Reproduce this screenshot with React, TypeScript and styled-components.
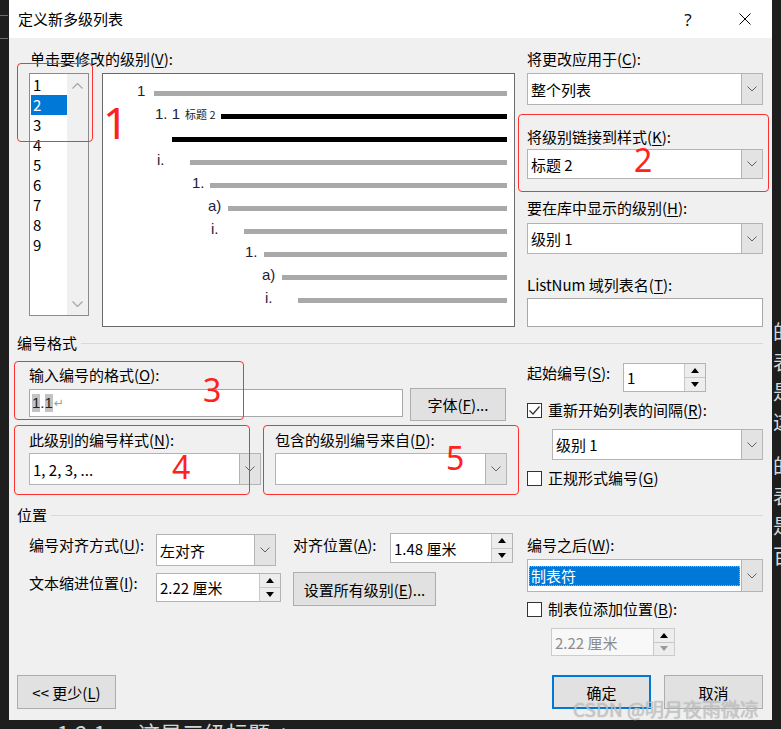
import React from "react";
import styled, { createGlobalStyle, css } from "styled-components";

const UI_FONT = `"Noto Sans CJK SC", "Noto Sans", sans-serif`;

const GlobalStyle = createGlobalStyle`
  html, body {
    margin: 0;
    padding: 0;
    background: #1e1e1e;
  }
  #root {
    width: 781px;
    height: 729px;
  }
`;

const levels = ["1", "2", "3", "4", "5", "6", "7", "8", "9"];

// x = where the number starts, bar = where the line starts (page px)
const previewRows = [
  { num: "1", x: 137, bar: 154 },
  { num: "1. 1", x: 155, bar: 221, tag: "标题 2", dark: true },
  { num: "", x: 172, bar: 172, dark: true },
  { num: "i.", x: 157, bar: 190 },
  { num: "1.", x: 192, bar: 210 },
  { num: "a)", x: 208, bar: 228 },
  { num: "i.", x: 211, bar: 244 },
  { num: "1.", x: 245, bar: 264 },
  { num: "a)", x: 262, bar: 282 },
  { num: "i.", x: 265, bar: 298 },
];

const marks = [
  { left: 17, top: 63, w: 76, h: 79 },
  { left: 518, top: 114, w: 251, h: 78 },
  { left: 14, top: 361, w: 230, h: 59 },
  { left: 14, top: 425, w: 236, h: 70 },
  { left: 263, top: 425, w: 256, h: 70 },
];

const markNums = [
  { n: "1", left: 103, top: 100, size: 44 },
  { n: "2", left: 634, top: 144, size: 32 },
  { n: "3", left: 203, top: 374, size: 32 },
  { n: "4", left: 172, top: 451, size: 32 },
  { n: "5", left: 446, top: 442, size: 32 },
];

function ChevronDown() {
  return (
    <svg width="10" height="6" viewBox="0 0 10 6">
      <polyline points="0.5,0.5 5,5 9.5,0.5" fill="none" stroke="#606060" strokeWidth="1" />
    </svg>
  );
}

function ScrollChevron({ up }: { up?: boolean }) {
  return (
    <svg width="11" height="6" viewBox="0 0 11 6">
      <polyline
        points={up ? "0.5,5.5 5.5,0.5 10.5,5.5" : "0.5,0.5 5.5,5.5 10.5,0.5"}
        fill="none"
        stroke="#a8a8a8"
        strokeWidth="1.3"
      />
    </svg>
  );
}

function ComboBox(props: {
  value?: string;
  w?: number;
  h: number;
  mt?: number;
  ml?: number;
  selected?: boolean;
}) {
  return (
    <ComboFrame $w={props.w} $h={props.h} $mt={props.mt} $ml={props.ml}>
      <ComboValue $selected={props.selected}>{props.value}</ComboValue>
      <DropButton>
        <ChevronDown />
      </DropButton>
    </ComboFrame>
  );
}

function SpinBox(props: {
  value: string;
  w: number;
  h: number;
  mt?: number;
  ml?: number;
  disabled?: boolean;
}) {
  return (
    <SpinFrame $w={props.w} $h={props.h} $mt={props.mt} $ml={props.ml} $disabled={props.disabled}>
      <SpinValue $disabled={props.disabled}>{props.value}</SpinValue>
      <SpinButtons>
        <SpinBtn>
          <Tri />
        </SpinBtn>
        <SpinBtn>
          <Tri $down $muted={props.disabled} />
        </SpinBtn>
      </SpinButtons>
    </SpinFrame>
  );
}

function CheckBox({ checked }: { checked?: boolean }) {
  return (
    <Box>
      {checked && (
        <svg width="13" height="13" viewBox="0 0 13 13">
          <polyline points="1.5,6.5 5,10 11.5,2.5" fill="none" stroke="#333" strokeWidth="1.2" />
        </svg>
      )}
    </Box>
  );
}

export default function App() {
  return (
    <>
      <GlobalStyle />
      <Page>
        <LeftStrip>
          <Tick $mt={15} />
          <Tick $mt={22} />
        </LeftStrip>

        <Dialog>
          <TitleBar>
            <TitleText>定义新多级列表</TitleText>
            <TitleButtons>
              <TitleButton>?</TitleButton>
              <TitleButton>
                <svg width="12" height="12" viewBox="0 0 12 12">
                  <line x1="0.5" y1="0.5" x2="11.5" y2="11.5" stroke="#000" strokeWidth="1" />
                  <line x1="11.5" y1="0.5" x2="0.5" y2="11.5" stroke="#000" strokeWidth="1" />
                </svg>
              </TitleButton>
            </TitleButtons>
          </TitleBar>

          <Body>
            {/* 级别 + 预览 */}
            <Section $h={295} $pt={11}>
              <Pane $pl={12}>
                <Label $ml={1}>
                  单击要修改的级别(<Key>V</Key>):
                </Label>
                <LevelRow>
                  <LevelList>
                    <LevelItems>
                      {levels.map((l) => (
                        <LevelItem key={l} $selected={l === "2"}>
                          {l}
                        </LevelItem>
                      ))}
                    </LevelItems>
                    <ScrollTrack>
                      <ScrollChevron up />
                      <ScrollChevron />
                    </ScrollTrack>
                  </LevelList>
                  <Preview>
                    {previewRows.map((r, i) => (
                      <PRow key={i} $indent={r.x - 103}>
                        <PNum $w={r.bar - r.x}>
                          {r.num}
                          {r.tag && <PTag>{r.tag}</PTag>}
                        </PNum>
                        <PBar $dark={r.dark} />
                      </PRow>
                    ))}
                  </Preview>
                </LevelRow>
              </Pane>
              <Pane>
                <Label>
                  将更改应用于(<Key>C</Key>):
                </Label>
                <ComboBox value="整个列表" h={32} mt={4} />
                <Label $mt={22}>
                  将级别链接到样式(<Key>K</Key>):
                </Label>
                <ComboBox value="标题 2" h={30} mt={2} />
                <Label $mt={19}>
                  要在库中显示的级别(<Key>H</Key>):
                </Label>
                <ComboBox value="级别 1" h={31} mt={5} />
                <Label $mt={21}>
                  ListNum 域列表名(<Key>T</Key>):
                </Label>
                <TextField $h={29} $mt={3} />
              </Pane>
            </Section>

            <GroupHeader>
              编号格式
              <GroupRule />
            </GroupHeader>

            <Section $h={152}>
              <Pane $pl={12}>
                <Label $mt={12}>
                  输入编号的格式(<Key>O</Key>):
                </Label>
                <InlineRow $mt={3}>
                  <TextField $w={374} $h={28} $mt={1}>
                    <FormatText>
                      <FieldMark>1</FieldMark>.<FieldMark>1</FieldMark>
                      <Return>↵</Return>
                    </FormatText>
                  </TextField>
                  <Button $w={96} $h={33} $ml={7}>
                    字体(<Key>F</Key>)...
                  </Button>
                </InlineRow>
                <InlineRow $mt={9} $gap={14}>
                  <Field>
                    <Label>
                      此级别的编号样式(<Key>N</Key>):
                    </Label>
                    <ComboBox value="1, 2, 3, ..." h={32} mt={3} />
                  </Field>
                  <Field>
                    <Label>
                      包含的级别编号来自(<Key>D</Key>):
                    </Label>
                    <ComboBox h={32} mt={3} />
                  </Field>
                </InlineRow>
              </Pane>
              <Pane>
                <InlineRow $mt={10}>
                  <Label $w={96}>
                    起始编号(<Key>S</Key>):
                  </Label>
                  <SpinBox value="1" w={83} h={29} />
                </InlineRow>
                <CheckRow $mt={8}>
                  <CheckBox checked />
                  <span>
                    重新开始列表的间隔(<Key>R</Key>):
                  </span>
                </CheckRow>
                <ComboBox value="级别 1" w={211} h={31} mt={9} ml={25} />
                <CheckRow $mt={8}>
                  <CheckBox />
                  <span>
                    正规形式编号(<Key>G</Key>)
                  </span>
                </CheckRow>
              </Pane>
            </Section>

            <GroupHeader>
              位置
              <GroupRule />
            </GroupHeader>

            <Section $h={140}>
              <Pane $pl={12}>
                <PosGrid>
                  <Label $mt={2}>
                    编号对齐方式(<Key>U</Key>):
                  </Label>
                  <ComboBox value="左对齐" w={120} h={32} mt={1} />
                  <Label $mt={2}>
                    对齐位置(<Key>A</Key>):
                  </Label>
                  <SpinBox value="1.48 厘米" w={123} h={30} />
                  <Label $mt={1}>
                    文本缩进位置(<Key>I</Key>):
                  </Label>
                  <SpinBox value="2.22 厘米" w={125} h={29} mt={1} />
                  <WideCell>
                    <Button $w={143} $h={34}>
                      设置所有级别(<Key>E</Key>)...
                    </Button>
                  </WideCell>
                </PosGrid>
              </Pane>
              <Pane>
                <Label $mt={10}>
                  编号之后(<Key>W</Key>):
                </Label>
                <ComboBox value="制表符" h={33} mt={4} selected />
                <CheckRow $mt={7}>
                  <CheckBox />
                  <span>
                    制表位添加位置(<Key>B</Key>):
                  </span>
                </CheckRow>
                <SpinBox value="2.22 厘米" w={124} h={28} mt={9} ml={24} disabled />
              </Pane>
            </Section>

            <Footer>
              <Button $w={99} $h={34}>
                {"<< 更少("}
                <Key>L</Key>)
              </Button>
              <FooterGroup>
                <Button $w={99} $h={34} $primary>
                  确定
                </Button>
                <Button $w={99} $h={34}>
                  取消
                </Button>
              </FooterGroup>
            </Footer>
          </Body>
        </Dialog>

        <RightStrip>
          <BackText>的表是这</BackText>
          <BackText $mt={14}>的表是百</BackText>
        </RightStrip>

        <BottomStrip>
          <BackLine>
            <span>1.2.1</span>
            <span>这是三级标题↵</span>
          </BackLine>
        </BottomStrip>

        <Overlay>
          {marks.map((m, i) => (
            <Mark key={i} $left={m.left} $top={m.top} $w={m.w} $h={m.h} />
          ))}
          {markNums.map((m) => (
            <MarkNum key={m.n} $left={m.left} $top={m.top} $size={m.size}>
              {m.n}
            </MarkNum>
          ))}
          <Watermark>CSDN @明月夜雨微凉</Watermark>
        </Overlay>
      </Page>
    </>
  );
}

const Page = styled.div`
  position: relative;
  width: 781px;
  height: 729px;
  overflow: hidden;
  display: grid;
  grid-template-columns: 9px 763px 9px;
  grid-template-rows: 720px 9px;
  background: #1e1e1e;
  font-family: ${UI_FONT};
  color: #000;
`;

const LeftStrip = styled.div`
  display: flex;
  flex-direction: column;
`;

const Tick = styled.div<{ $mt: number }>`
  width: 8px;
  height: 1px;
  margin-top: ${(p) => p.$mt}px;
  background: #6c6c6c;
`;

const RightStrip = styled.div`
  overflow: hidden;
  padding-top: 317px;
  padding-left: 1px;
`;

const BackText = styled.div<{ $mt?: number }>`
  width: 20px;
  margin-top: ${(p) => p.$mt || 0}px;
  font-size: 20px;
  line-height: 30px;
  color: #d6d6d6;
  word-break: break-all;
`;

const BottomStrip = styled.div`
  grid-column: 1 / 4;
  overflow: hidden;
`;

const BackLine = styled.div`
  display: flex;
  gap: 32px;
  padding: 1px 0 0 57px;
  font-size: 22px;
  line-height: 22px;
  color: #d6d6d6;
  white-space: nowrap;
`;

const Dialog = styled.div`
  display: flex;
  flex-direction: column;
  background: #f0f0f0;
`;

const TitleBar = styled.div`
  height: 38px;
  flex-shrink: 0;
  box-sizing: border-box;
  padding: 0 4px 0 9px;
  display: flex;
  align-items: center;
  background: #fff;
`;

const TitleText = styled.div`
  flex: 1;
  font-size: 15px;
  line-height: 20px;
`;

const TitleButtons = styled.div`
  display: flex;
  gap: 11px;
`;

const TitleButton = styled.div`
  width: 46px;
  height: 38px;
  display: flex;
  align-items: center;
  justify-content: center;
  font-family: "Noto Sans", sans-serif;
  font-size: 17px;
  color: #111;
`;

const Body = styled.div`
  flex: 1;
  display: flex;
  flex-direction: column;
  padding: 0 9px 0 8px;
`;

const Section = styled.div<{ $h: number; $pt?: number }>`
  height: ${(p) => p.$h}px;
  box-sizing: border-box;
  padding-top: ${(p) => p.$pt || 0}px;
  display: grid;
  grid-template-columns: 510px 236px;
  align-items: start;
`;

const Pane = styled.div<{ $pl?: number }>`
  display: flex;
  flex-direction: column;
  align-items: flex-start;
  padding-left: ${(p) => p.$pl || 0}px;
  & > * {
    flex-shrink: 0;
  }
`;

const Label = styled.div<{ $mt?: number; $ml?: number; $w?: number }>`
  height: 20px;
  margin-top: ${(p) => p.$mt || 0}px;
  margin-left: ${(p) => p.$ml || 0}px;
  ${(p) => p.$w && `width: ${p.$w}px;`}
  flex-shrink: 0;
  font-size: 15px;
  line-height: 20px;
  white-space: nowrap;
`;

const Key = styled.u`
  text-underline-offset: 2px;
`;

const GroupHeader = styled.div`
  height: 20px;
  display: flex;
  align-items: center;
  gap: 4px;
  font-size: 15px;
  line-height: 20px;
  white-space: nowrap;
`;

const GroupRule = styled.div`
  flex: 1;
  height: 1px;
  background: #d9d9d9;
`;

const LevelRow = styled.div`
  display: flex;
  align-items: flex-start;
  gap: 13px;
  margin-top: 4px;
`;

const LevelList = styled.div`
  width: 60px;
  height: 243px;
  box-sizing: border-box;
  border: 1px solid #8c8c8c;
  background: #fff;
  display: flex;
`;

const LevelItems = styled.div`
  width: 37px;
  padding: 1px 0 0 1px;
  box-sizing: border-box;
`;

const LevelItem = styled.div<{ $selected?: boolean }>`
  height: 20px;
  padding-left: 2px;
  font-size: 15px;
  line-height: 20px;
  ${(p) =>
    p.$selected &&
    css`
      background: #0078d7;
      color: #fff;
    `}
`;

const ScrollTrack = styled.div`
  flex: 1;
  background: #f0f0f0;
  display: flex;
  flex-direction: column;
  justify-content: space-between;
  align-items: center;
  padding: 9px 0 8px;
`;

const Preview = styled.div`
  width: 413px;
  height: 254px;
  box-sizing: border-box;
  border: 1px solid #6a6a6a;
  background: #fff;
  padding-top: 8px;
`;

const PRow = styled.div<{ $indent: number }>`
  height: 23px;
  display: flex;
  align-items: center;
  padding: 0 7px 0 ${(p) => p.$indent}px;
`;

const PNum = styled.span<{ $w: number }>`
  width: ${(p) => p.$w}px;
  flex-shrink: 0;
  padding-bottom: 5px;
  display: flex;
  align-items: baseline;
  font-family: "Liberation Sans", "Noto Sans", sans-serif;
  font-size: 15px;
  line-height: 18px;
  color: #1d2040;
  white-space: pre;
`;

const PTag = styled.span`
  margin-left: 5px;
  font-family: ${UI_FONT};
  font-size: 11px;
  color: #222;
`;

const PBar = styled.div<{ $dark?: boolean }>`
  flex: 1;
  height: 5px;
  background: ${(p) => (p.$dark ? "#000" : "#a9a9a9")};
`;

const ComboFrame = styled.div<{ $w?: number; $h: number; $mt?: number; $ml?: number }>`
  width: ${(p) => (p.$w ? `${p.$w}px` : "100%")};
  height: ${(p) => p.$h}px;
  margin-top: ${(p) => p.$mt || 0}px;
  margin-left: ${(p) => p.$ml || 0}px;
  box-sizing: border-box;
  border: 1px solid #b4b4b4;
  background: #fff;
  display: flex;
`;

const ComboValue = styled.div<{ $selected?: boolean }>`
  flex: 1;
  display: flex;
  align-items: center;
  padding-left: 3px;
  font-size: 15px;
  white-space: nowrap;
  ${(p) =>
    p.$selected &&
    css`
      align-self: center;
      height: 20px;
      margin: 0 1px;
      padding-left: 2px;
      background: #0078d7;
      color: #fff;
      outline: 1px dotted #e9a24a;
      outline-offset: -1px;
    `}
`;

const DropButton = styled.div`
  width: 20px;
  display: flex;
  align-items: center;
  justify-content: center;
  background: #e3e3e3;
  border-left: 1px solid #b4b4b4;
`;

const TextField = styled.div<{ $w?: number; $h: number; $mt?: number }>`
  width: ${(p) => (p.$w ? `${p.$w}px` : "100%")};
  height: ${(p) => p.$h}px;
  margin-top: ${(p) => p.$mt || 0}px;
  box-sizing: border-box;
  border: 1px solid #a8a8a8;
  background: #fff;
  display: flex;
  align-items: center;
  padding-left: 2px;
`;

const FormatText = styled.div`
  display: flex;
  align-items: center;
  font-family: "Liberation Sans", sans-serif;
  font-size: 15px;
  line-height: 18px;
  color: #222;
`;

const FieldMark = styled.span`
  background: #c3c3c3;
`;

const Return = styled.span`
  margin-left: 1px;
  font-family: "DejaVu Sans", sans-serif;
  font-size: 12px;
  color: #9a9a9a;
`;

const InlineRow = styled.div<{ $mt?: number; $gap?: number }>`
  display: flex;
  align-items: flex-start;
  margin-top: ${(p) => p.$mt || 0}px;
  gap: ${(p) => p.$gap || 0}px;
`;

const Field = styled.div`
  width: 232px;
  display: flex;
  flex-direction: column;
`;

const Button = styled.div<{ $w: number; $h: number; $ml?: number; $primary?: boolean }>`
  width: ${(p) => p.$w}px;
  height: ${(p) => p.$h}px;
  margin-left: ${(p) => p.$ml || 0}px;
  box-sizing: border-box;
  display: flex;
  align-items: center;
  justify-content: center;
  background: #e1e1e1;
  border: 1px solid #adadad;
  font-size: 15px;
  white-space: nowrap;
  ${(p) =>
    p.$primary &&
    css`
      border: 2px solid #0078d7;
    `}
`;

const SpinFrame = styled.div<{
  $w: number;
  $h: number;
  $mt?: number;
  $ml?: number;
  $disabled?: boolean;
}>`
  width: ${(p) => p.$w}px;
  height: ${(p) => p.$h}px;
  margin-top: ${(p) => p.$mt || 0}px;
  margin-left: ${(p) => p.$ml || 0}px;
  box-sizing: border-box;
  border: 1px solid ${(p) => (p.$disabled ? "#cccccc" : "#b4b4b4")};
  background: ${(p) => (p.$disabled ? "#f8f8f8" : "#fff")};
  display: flex;
`;

const SpinValue = styled.div<{ $disabled?: boolean }>`
  flex: 1;
  display: flex;
  align-items: center;
  padding-left: 3px;
  font-size: 15px;
  white-space: nowrap;
  color: ${(p) => (p.$disabled ? "#8c8c8c" : "#000")};
`;

const SpinButtons = styled.div`
  width: 20px;
  display: flex;
  flex-direction: column;
  border-left: 1px solid #c8c8c8;
`;

const SpinBtn = styled.div`
  flex: 1;
  display: flex;
  align-items: center;
  justify-content: center;
  background: #ededed;
  & + & {
    border-top: 1px solid #c8c8c8;
  }
`;

const Tri = styled.span<{ $down?: boolean; $muted?: boolean }>`
  width: 0;
  height: 0;
  border-left: 4px solid transparent;
  border-right: 4px solid transparent;
  ${(p) =>
    p.$down
      ? `border-top: 5px solid ${p.$muted ? "#9a9a9a" : "#000"};`
      : `border-bottom: 5px solid ${p.$muted ? "#9a9a9a" : "#000"};`}
`;

const CheckRow = styled.div<{ $mt?: number }>`
  height: 20px;
  margin-top: ${(p) => p.$mt || 0}px;
  display: flex;
  align-items: center;
  gap: 6px;
  font-size: 15px;
  line-height: 20px;
  white-space: nowrap;
`;

const Box = styled.span`
  width: 15px;
  height: 15px;
  box-sizing: border-box;
  border: 1px solid #333;
  background: #fff;
  display: inline-flex;
  align-items: center;
  justify-content: center;
`;

const PosGrid = styled.div`
  margin-top: 8px;
  display: grid;
  grid-template-columns: 127px 137px 97px 123px;
  grid-template-rows: 33px 34px;
  row-gap: 6px;
  align-items: start;
`;

const WideCell = styled.div`
  grid-column: 3 / 5;
`;

const Footer = styled.div`
  height: 55px;
  box-sizing: border-box;
  padding-top: 10px;
  display: flex;
  justify-content: space-between;
  align-items: flex-start;
`;

const FooterGroup = styled.div`
  display: flex;
  gap: 13px;
`;

const Overlay = styled.div`
  position: absolute;
  inset: 0;
  pointer-events: none;
`;

const Mark = styled.div<{ $left: number; $top: number; $w: number; $h: number }>`
  position: absolute;
  left: ${(p) => p.$left}px;
  top: ${(p) => p.$top}px;
  width: ${(p) => p.$w}px;
  height: ${(p) => p.$h}px;
  box-sizing: border-box;
  border: 1px solid #ff3030;
  border-radius: 4px;
`;

const MarkNum = styled.div<{ $left: number; $top: number; $size: number }>`
  position: absolute;
  left: ${(p) => p.$left}px;
  top: ${(p) => p.$top}px;
  font-family: "Noto Sans", sans-serif;
  font-size: ${(p) => p.$size}px;
  line-height: 1;
  color: #ff2020;
`;

const Watermark = styled.div`
  position: absolute;
  left: 573px;
  top: 697px;
  font-family: ${UI_FONT};
  font-size: 19px;
  line-height: 24px;
  color: rgba(205, 205, 205, 0.8);
  text-shadow: 0 0 1px rgba(90, 90, 90, 0.5);
  white-space: nowrap;
`;
